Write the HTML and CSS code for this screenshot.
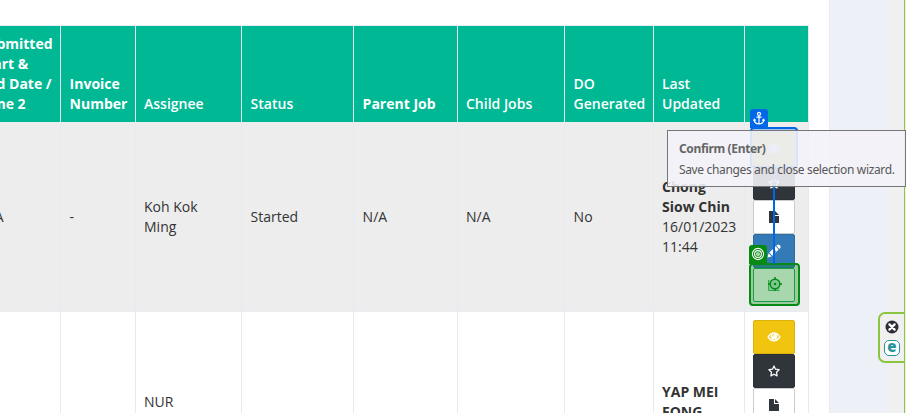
FILE: index.html
```html
<!DOCTYPE html>
<html lang="en">
<head>
<meta charset="utf-8">
<title>Jobs</title>
<link rel="stylesheet" href="styles.css">
</head>
<body>
<svg class="defs" aria-hidden="true">
  <symbol id="eye" viewBox="0 0 14 10"><path fill="currentColor" fill-rule="evenodd" d="M0.3 5Q3 .3 7 .3T13.7 5Q11 9.5 7 9.5T.3 5ZM2 5Q4 8.1 7 8.1T12 5Q11.2 3.3 9.7 2.4Q10.4 3.3 10.4 4.2A3.4 3.3 0 0 1 3.6 4.2Q3.6 3.3 4.3 2.4Q2.8 3.3 2 5ZM5 4.3H6Q6 3 7.2 2.8V1.9Q5 2 5 4.3Z"/></symbol>
  <symbol id="star" viewBox="0 0 12 12"><path fill="none" stroke="currentColor" stroke-width="1.25" stroke-linejoin="round" d="M6 1l1.5 3.2 3.6.5-2.6 2.5.6 3.7L6 9.2l-3.1 1.7.6-3.7L.9 4.7l3.6-.5Z"/></symbol>
  <symbol id="file" viewBox="0 0 10 12"><path fill="currentColor" d="M0 0h5v5h5v7H0ZM6 0l4 4H6Z"/></symbol>
  <symbol id="pencil" viewBox="0 0 14 14"><path fill="currentColor" d="M.5 13.5l1.1-4.2 3.1 3.1ZM2.3 8.6l3.3-3.3 3.1 3.1-3.3 3.3ZM6.3 4.6L8.6 2.3l3.1 3.1-2.3 2.3ZM9.2 1.7L10.3.7h1.9l1.3 1.3v1.8l-1.1 1.1Z"/></symbol>
</svg>
<div class="page">
  <main class="panel">
    <div class="table">
      <div class="row head">
        <div class="cell first"><span class="clip">Submitted<br>Start &amp;<br>End Date /<br>Time 2</span></div>
        <div class="cell">Invoice Number</div>
        <div class="cell semi">Assignee</div>
        <div class="cell semi">Status</div>
        <div class="cell">Parent Job</div>
        <div class="cell semi">Child Jobs</div>
        <div class="cell semi">DO Generated</div>
        <div class="cell semi">Last Updated</div>
        <div class="cell"></div>
      </div>
      <div class="row odd">
        <div class="cell first"><span class="clip na">N/A</span></div>
        <div class="cell">-</div>
        <div class="cell">Koh Kok Ming</div>
        <div class="cell">Started</div>
        <div class="cell">N/A</div>
        <div class="cell">N/A</div>
        <div class="cell">No</div>
        <div class="cell"><span><b>Chong Siow Chin</b><br>16/01/2023 11:44</span></div>
        <div class="cell actions">
          <button class="btn yellow"><svg width="14" height="10"><use href="#eye"/></svg></button>
          <button class="btn dark"><svg width="12" height="12"><use href="#star"/></svg></button>
          <button class="btn white"><svg width="10" height="12"><use href="#file"/></svg></button>
          <button class="btn blue"><svg width="14" height="14"><use href="#pencil"/></svg></button>
          <button class="btn green"><svg width="12" height="12"><path d="M.5 1h11v11H.5Z" fill="#c4ead3"/><path d="M.5 1v10.5h11" fill="none" stroke="#4fb87c"/></svg></button>
        </div>
      </div>
      <div class="row even">
        <div class="cell first"></div>
        <div class="cell"></div>
        <div class="cell name">NUR</div>
        <div class="cell"></div>
        <div class="cell"></div>
        <div class="cell"></div>
        <div class="cell"></div>
        <div class="cell updated"><b>YAP MEI FONG</b></div>
        <div class="cell actions">
          <button class="btn yellow"><svg width="14" height="10"><use href="#eye"/></svg></button>
          <button class="btn dark"><svg width="12" height="12"><use href="#star"/></svg></button>
          <button class="btn white"><svg width="10" height="12"><use href="#file"/></svg></button>
        </div>
      </div>
    </div>
  </main>
  <aside class="gutter"></aside>
  <aside class="edge"></aside>
</div>

<div class="anchor-frame"></div>
<div class="tag anchor-tag"><svg width="18" height="19" viewBox="0 0 18 19" fill="none" stroke="#fff" stroke-width="1.2"><circle cx="9" cy="4.9" r="1.5"/><path d="M9 6.5V15M6.4 8.2h5.2M4.2 10.5Q4.2 14.7 9 15Q13.8 14.7 13.8 10.5M3.6 12l.7-1.7 1.5 1.1M14.4 12l-.7-1.7-1.5 1.1"/></svg></div>
<div class="target-frame"><svg width="14" height="14" viewBox="0 0 14 14" fill="none" stroke="#078a13" stroke-width="1.5"><circle cx="7" cy="7" r="4.8"/><path d="M7 0v3M7 11v3M0 7h3M11 7h3"/><circle cx="7" cy="7" r="1.3" fill="#078a13" stroke="none"/></svg></div>
<div class="link"></div>
<div class="tag target-tag"><svg width="18" height="18" viewBox="0 0 18 18" fill="none" stroke="#fff" stroke-width="1.1"><circle cx="9" cy="9" r="5.6"/><circle cx="9" cy="9" r="3.4"/><circle cx="9" cy="9" r="1.3"/></svg></div>

<div class="tooltip"><strong>Confirm (Enter)</strong><span>Save changes and close selection wizard.</span></div>

<div class="dock">
  <svg width="14" height="14" viewBox="0 0 14 14"><circle cx="7" cy="7" r="6.5" fill="#2b2d38"/><path d="M4.4 4.4l5.2 5.2M9.6 4.4L4.4 9.6" stroke="#fff" stroke-width="2.3" stroke-linecap="round"/></svg>
  <span class="logo">e</span>
</div>
</body>
</html>
```

FILE: styles.css
```css
* { box-sizing: border-box; }
body {
  margin: 0;
  height: 413px;
  overflow: hidden;
  position: relative;
  font: 14px/20px "Open Sans", sans-serif;
  color: #333;
}
.defs { position: absolute; width: 0; height: 0; }
.page { display: flex; height: 413px; overflow: hidden; }
.panel { width: 829px; padding-top: 25px; background: #fff; }
.gutter { width: 60px; background: #edf0f6; border-left: 1px solid #e8ecf1; }
.edge { width: 17px; background: #f0f0f0; border-right: 1px solid #f0f0f0; box-shadow: inset -1px 0 #8cc63f; }
.table { width: 809px; border-top: 1px solid #e7ecf1; }
.row { display: grid; grid-template-columns: 61px 75px 106px 112px 104px 107px 89px 91px 64px; }
.cell {
  display: flex;
  align-items: center;
  padding: 0 8px;
  border-right: 1px solid #e7eaf0;
  min-width: 0;
}
.cell:nth-child(2), .cell:nth-child(4), .cell:nth-child(5), .cell:nth-child(7) { padding: 0 7px 0 8.6px; }
.head { height: 96px; background: #00b894; color: #fff; font-weight: 700; }
.head .cell { align-items: flex-end; padding-bottom: 8px; }
.semi { font-weight: 600; }
.odd { height: 190px; background: #ededed; border-bottom: 1px solid #e7ecf1; }
.odd .cell { padding-top: 1px; }
.even { height: 190px; background: #fff; }
.first { overflow: hidden; }
.clip { margin-left: -28.5px; white-space: nowrap; }
.na { margin-left: -29px; }
.even .name { align-items: flex-start; padding-top: 80px; }
.even .updated { align-items: flex-start; padding-top: 70px; }
.odd .actions, .actions { flex-direction: column; align-items: flex-start; justify-content: flex-start; padding-top: 10px; }
.even .actions { padding-top: 8px; }
.btn {
  display: flex;
  flex: none;
  align-items: center;
  justify-content: center;
  width: 42px;
  height: 34px;
  padding: 0;
  border: 1px solid;
  border-radius: 2px;
}
.yellow { background: #f1c40f; border-color: #dab10d; color: #fff; }
.dark { background: #2f353b; border-color: #2b3036; color: #fff; }
.white { background: #fff; border-color: #ccc; color: #2f353b; }
.blue { background: #337ab7; border-color: #2e6da4; color: #fff; }
.green { background: #fff; border-color: #26a65b; }

.anchor-frame {
  position: absolute;
  left: 750px;
  top: 127px;
  width: 48px;
  height: 41px;
  border: 2px solid #0068e6;
  border-radius: 4px;
  background: rgba(0, 104, 230, .3);
}
.tag { position: absolute; width: 18px; height: 19px; border-radius: 3px 3px 0 0; }
.tag svg { display: block; }
.anchor-tag { left: 750px; top: 109px; background: #0068e6; }
.link { position: absolute; left: 773px; top: 168px; width: 2px; height: 96px; background: #0068e6; }
.target-frame {
  position: absolute;
  left: 749px;
  top: 263px;
  width: 51px;
  height: 43px;
  display: flex;
  align-items: center;
  justify-content: center;
  padding-bottom: 1px;
  border: 2px solid #078a13;
  border-radius: 4px;
  background: rgba(7, 138, 19, .35);
}
.target-tag { left: 749px; top: 245px; background: #078a13; }
.tooltip {
  position: absolute;
  left: 667px;
  top: 130px;
  width: 239px;
  height: 57px;
  padding: 9px 0 0 11px;
  border: 1px solid #767676;
  background: rgba(242, 242, 248, .9);
  color: #575757;
  font: 12px/18px "Noto Sans", sans-serif;
  letter-spacing: -.35px;
  white-space: nowrap;
}
.tooltip strong, .tooltip span { display: block; }
.tooltip strong { margin-bottom: 3px; font-weight: 700; color: #666; }
.dock {
  position: absolute;
  left: 878px;
  top: 312px;
  width: 27px;
  height: 51px;
  display: flex;
  flex-direction: column;
  align-items: center;
  gap: 6px;
  padding-top: 6px;
  border: 2px solid #8cc63f;
  border-right-width: 1px;
  border-radius: 7px 0 0 7px;
  background: #f0f0f0;
}
.logo {
  width: 16px;
  height: 16px;
  border: 1.5px solid #27939b;
  border-radius: 5px;
  background: #fff;
  color: #27939b;
  font: 800 15px/11px "Open Sans", sans-serif;
  text-align: center;
}
```
